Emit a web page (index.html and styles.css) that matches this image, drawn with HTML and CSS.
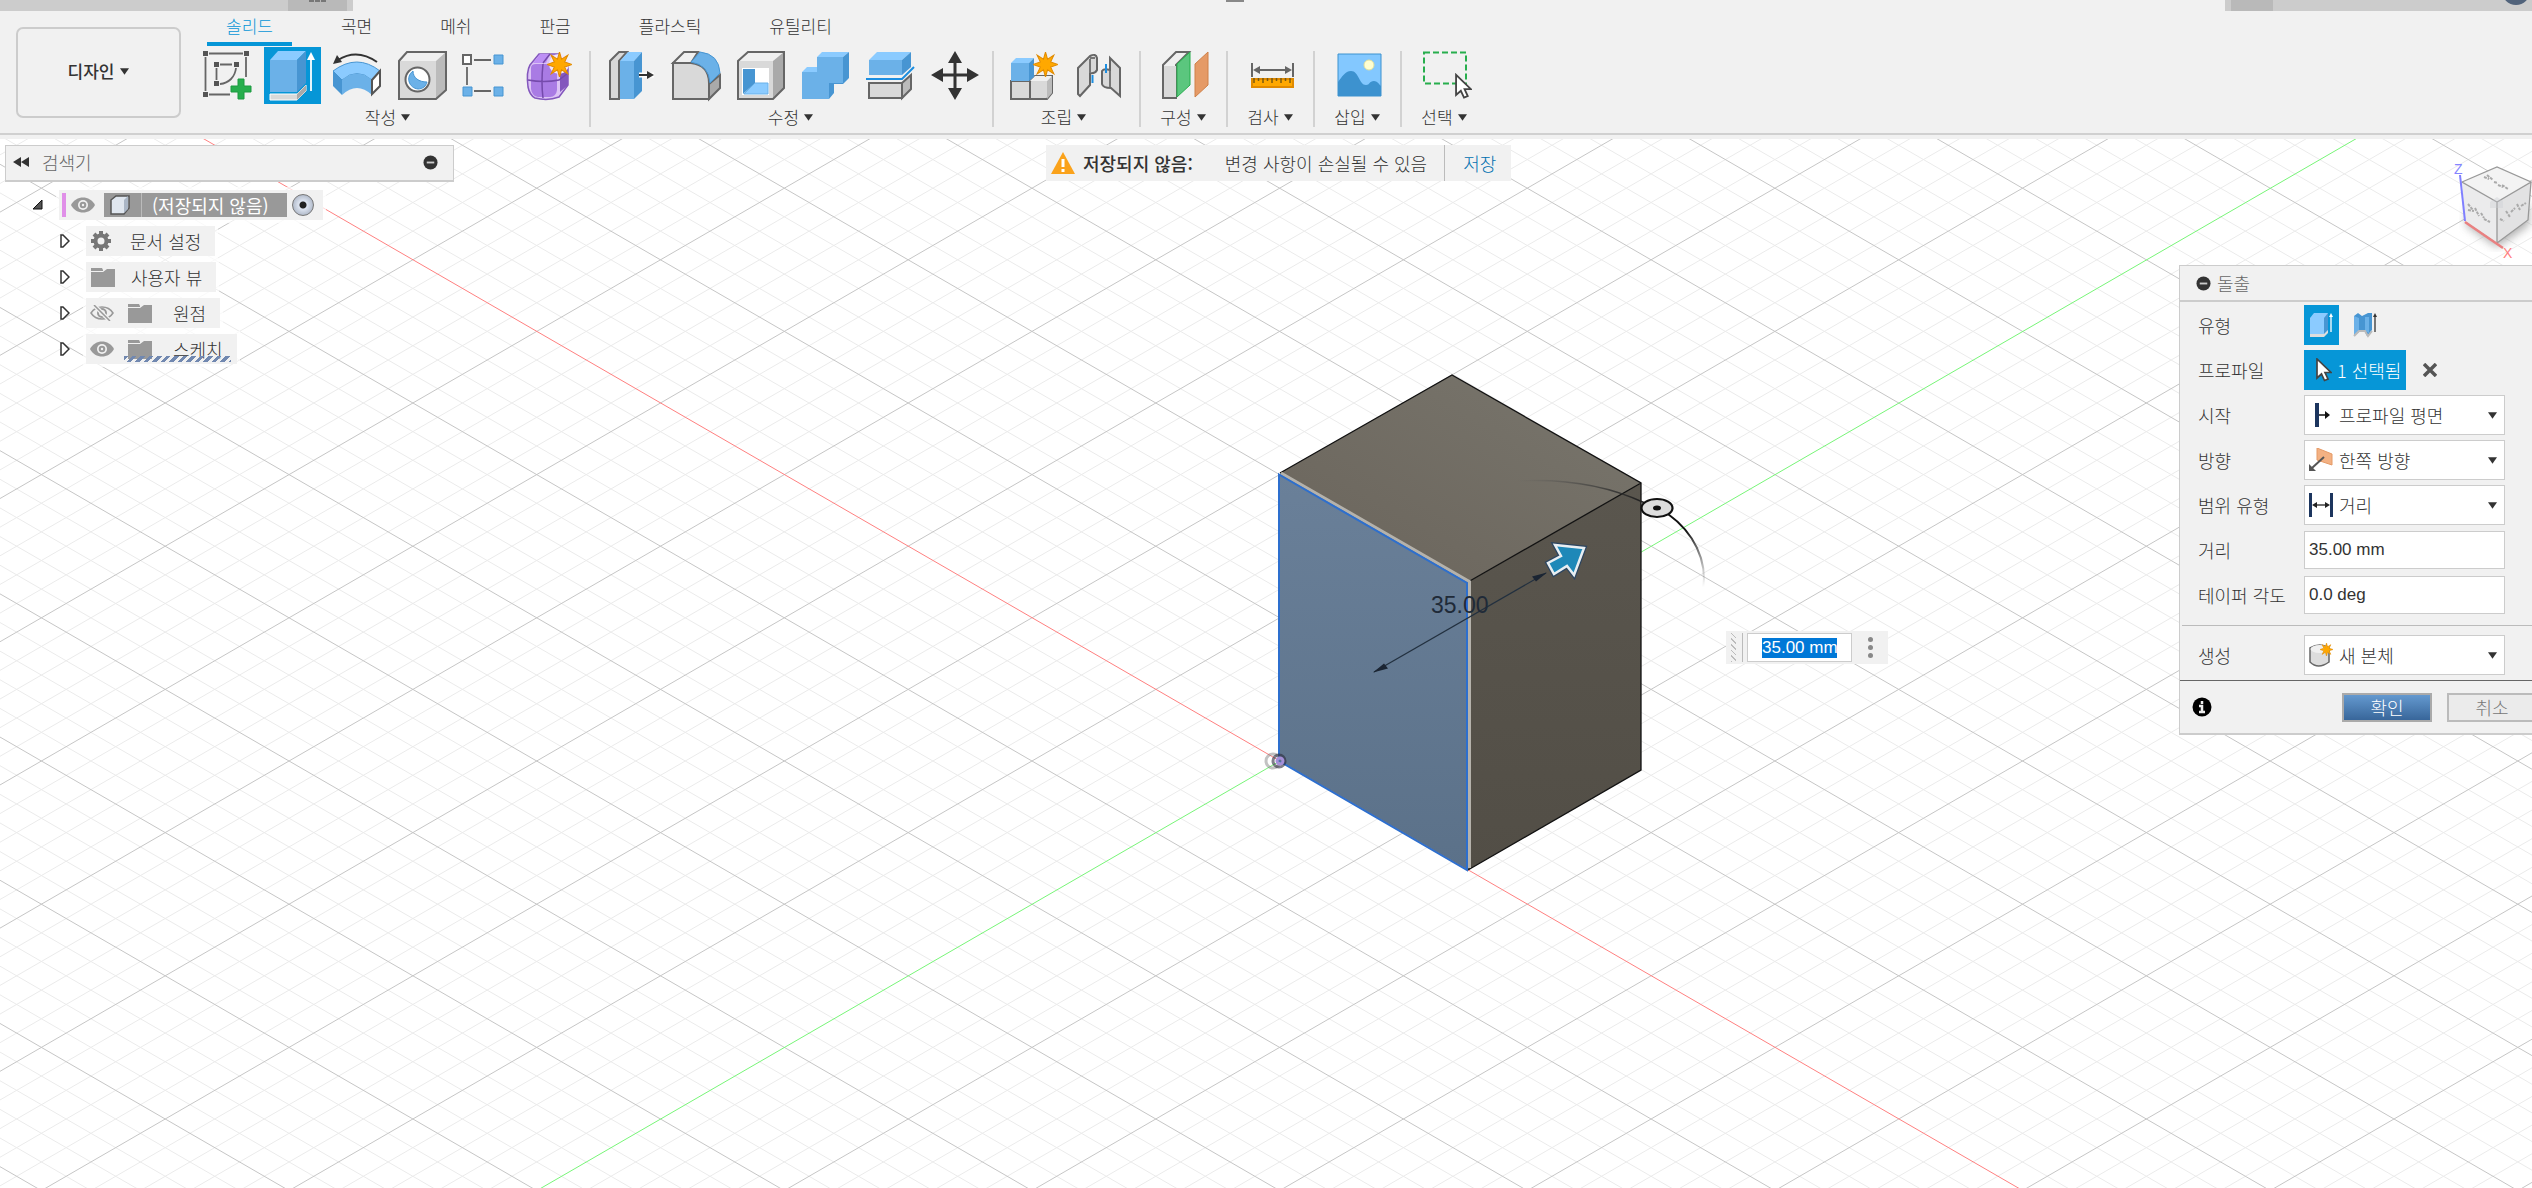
FILE: index.html
```html
<!DOCTYPE html>
<html lang="ko">
<head>
<meta charset="utf-8">
<title>디자인</title>
<link rel="stylesheet" href="styles.css">
</head>
<body>
<svg class="defs" aria-hidden="true">
  <defs>
    <symbol id="i-star" viewBox="0 0 24 24"><path d="M12 0l2 7 6-4-3 6.500 7 2.500-7 2.500 3 6.500-6-4-2 7-2-7-6 4 3-6.500-7-2.500 7-2.500-3-6.500 6 4z" fill="#ffa800" stroke="#e08a00"/></symbol>
    <symbol id="i-down" viewBox="0 0 10 7"><path d="M0 0h10L5 7z" fill="#333"/></symbol>
    <symbol id="i-minus" viewBox="0 0 16 16"><circle cx="8" cy="8" r="7.500" fill="#333"/><path d="M4 8h8" stroke="#ccc" stroke-width="2"/></symbol>
    <symbol id="i-eye" viewBox="0 0 24 16"><path d="M0 8C5-2 19-2 24 8 19 18 5 18 0 8z" fill="#999"/><circle cx="12" cy="8" r="5" fill="#f1f1f1"/><circle cx="12" cy="8" r="3.300" fill="#999"/><circle cx="12" cy="8" r="1.200" fill="#f1f1f1"/></symbol>
    <symbol id="i-folder" viewBox="0 0 26 20"><path d="M1 1h11l1 2v1H1zM1 5h12l4-3h8v18H1z" fill="#999"/></symbol>
    <symbol id="i-expand" viewBox="0 0 10 14"><path d="M1 1v12h2l6-6-6-6z" fill="#fff" stroke="#333" stroke-width="1.500"/></symbol>
    <symbol id="i-cursor" viewBox="0 0 16 24"><path d="M1 1v19l4.500-4 3 6.500 3.500-1.500-3-6.500h6z" fill="#fff" stroke="#444" stroke-width="1.700"/></symbol>
  </defs>
</svg>

<header class="toolbar">
  <div class="strip">
    <div class="strip-left"><span class="strip-tab"><i></i><i></i><i></i></span></div>
    <div class="strip-handle"></div>
    <div class="strip-right"><span class="strip-tab"></span><span class="avatar"></span></div>
  </div>
  <div class="toolbar-body">
    <button class="workspace" type="button">디자인 <svg class="down"><use href="#i-down"/></svg></button>
    <div class="ribbon">
      <nav class="tabs">
        <a href="#solid" class="tab active">솔리드</a>
        <a href="#surface" class="tab">곡면</a>
        <a href="#mesh" class="tab">메쉬</a>
        <a href="#sheet" class="tab">판금</a>
        <a href="#plastic" class="tab">플라스틱</a>
        <a href="#utility" class="tab">유틸리티</a>
      </nav>
      <div class="groups">
        <section class="group">
          <div class="tools">
            <button class="tool" type="button" aria-label="스케치 작성"><svg viewBox="0 0 49 49"><path d="M6 2.500h34M2.500 6v34M6 43.500h21M43 6v20M17 13.500h12M13.500 17v12M33 17c-1 9-7 15-16 16" fill="none" stroke="#666" stroke-width="1.800"/><path d="M0 0h5v5H0zM41 0h5v5h-5zM0 41h5v5H0zM11 11h5v5h-5zM31 11h5v5h-5zM11 30h5v5h-5z" fill="#555"/><path d="M35 28h6v7h7v6h-7v7h-6v-7h-7v-6h7z" fill="#27ae4d" stroke="#1d9a40"/></svg></button>
            <button class="tool selected" type="button" aria-label="돌출"><svg viewBox="0 0 49 49"><path d="M2 9h27v32H2z" fill="#6bb1e8"/><path d="M2 9l8-9h28l-9 9z" fill="#8bcbff"/><path d="M29 9l9-9v32l-9 9z" fill="#4795d2"/><path d="M2 43h27l9-9v6l-9 9H2z" fill="#d9d9d9" stroke="#fff"/><path d="M29 43l9-9v6l-9 9z" fill="#aaa"/><path d="M43 40V7" stroke="#fff" stroke-width="1.800"/><path d="M43 1l4 8h-8z" fill="#fff"/></svg></button>
            <button class="tool" type="button" aria-label="회전"><svg viewBox="0 0 49 49"><path d="M0 20q24-18 47 0l-8 9q-15-13-30 0z" fill="#8bcbff" stroke="#4795d2"/><path d="M9 29q15-13 30 0v15q-15-14-30 0z" fill="#6bb1e8"/><path d="M0 20l9 9v15l-9-9z" fill="#4795d2"/><path d="M39 29l8-9v15l-8 8z" fill="#fff" stroke="#555" stroke-width="2"/><path d="M44 11Q24-3 5 9" fill="none" stroke="#333" stroke-width="2"/><path d="M0 13l4-9 5 7z" fill="#333"/></svg></button>
            <button class="tool" type="button" aria-label="구멍"><svg viewBox="0 0 49 49"><path d="M1 10h37v38H1z" fill="#d9d9d9"/><path d="M1 10l8-9h39L38 10z" fill="#f0f0f0"/><path d="M38 10l10-9v38l-10 9z" fill="#bbb"/><path d="M1 48V10l8-9h39v38l-10 9z" fill="none" stroke="#666" stroke-width="2"/><circle cx="19.500" cy="28.500" r="12" fill="#fff" stroke="#666" stroke-width="2"/><path d="M15 20c-8 6-4 17 5 18 5 0 8-3 9-7-8 0-14-4-14-11z" fill="#6bb1e8" stroke="#4795d2"/></svg></button>
            <button class="tool" type="button" aria-label="직사각형 패턴"><svg viewBox="0 0 49 49"><path d="M11 9h17M4 16v18M11 40h17" stroke="#666" stroke-width="1.800"/><path d="M0 4h8v9H0z" fill="#fff" stroke="#666" stroke-width="2"/><path d="M31 4h9v9h-9zM0 36h9v9H0zM31 36h9v9h-9z" fill="#6bb1e8" stroke="#4795d2"/></svg></button>
            <button class="tool" type="button" aria-label="양식 작성"><svg viewBox="0 0 49 49"><path d="M0 36c-1-8-1-17 2-22L11 3h20l9 12v19l-9 12c-8 3-16 3-24 1-4-2-6-6-7-11z" fill="#dcc3f5" stroke="#8357bd" stroke-width="1.500"/><path d="M12 3h10l-4 9H5z" fill="#bd8ff5"/><path d="M3 17q0-4 5-4h16q5 0 5 6v20q-1 7-7 7H10q-6-1-7-8z" fill="#a97be4"/><path d="M32 14l8-2v22l-8 7z" fill="#8357bd"/><path d="M0 29q16 3 31 0l9-7M15 13q-2 18 0 34M15 12l7-9" fill="none" stroke="#754aac" stroke-width="1.500"/><circle cx="31" cy="13" r="10" fill="#f1e6fb"/><use href="#i-star" x="19" y="1" width="25" height="25"/></svg></button>
          </div>
          <button class="menu" type="button">작성<svg class="down"><use href="#i-down"/></svg></button>
        </section>
        <section class="group">
          <div class="tools">
            <button class="tool" type="button" aria-label="밀고 당기기"><svg viewBox="0 0 49 49"><path d="M13 48H4V10l9-9h8l-8 9z" fill="#d9d9d9" stroke="#666" stroke-width="2"/><path d="M14 10h14v38H14z" fill="#6bb1e8"/><path d="M14 10l8-9h14l-8 9z" fill="#8bcbff"/><path d="M28 10l8-9v39l-8 8z" fill="#4795d2"/><path d="M33 24h15" stroke="#fff" stroke-width="5"/><path d="M33 24h9" stroke="#333" stroke-width="2"/><path d="M41 20l7 4-7 4z" fill="#333"/></svg></button>
            <button class="tool" type="button" aria-label="모깎기"><svg viewBox="0 0 49 49"><path d="M2 12L13 1h14l-7 11z" fill="#f0f0f0" stroke="#666" stroke-width="2"/><path d="M2 12h18q18 2 18 20v16H2z" fill="#d9d9d9" stroke="#666" stroke-width="2"/><path d="M38 33l11-9v13L38 48z" fill="#aaa" stroke="#666" stroke-width="2"/><path d="M20 11l9-10q19 2 20 21L39 32Q38 14 20 11z" fill="#6bb1e8" stroke="#4795d2"/></svg></button>
            <button class="tool" type="button" aria-label="쉘"><svg viewBox="0 0 49 49"><path d="M2 10h35v38H2z" fill="#d9d9d9"/><path d="M2 10l10-9h36L37 10z" fill="#f0f0f0"/><path d="M37 10l11-9v36L37 48z" fill="#aaa"/><path d="M2 48V10l10-9h36v36L37 48z" fill="none" stroke="#666" stroke-width="2"/><path d="M6 17h27v27H6z" fill="#fff"/><path d="M7 18h12v14L7 43z" fill="#4795d2"/><path d="M19 32h13v11H8z" fill="#8bcbff" stroke="#6bb1e8"/></svg></button>
            <button class="tool" type="button" aria-label="결합"><svg viewBox="0 0 49 49"><path d="M1 21h15V6h26v26H28v16H1z" fill="#6bb1e8"/><path d="M1 21l5-5h10v5zM16 6l5-5h27l-6 5z" fill="#8bcbff"/><path d="M42 6l6-5v26l-6 6h-9v9l-5 6V32h14z" fill="#4795d2"/></svg></button>
            <button class="tool" type="button" aria-label="본체 분할"><svg viewBox="0 0 49 49"><path d="M3 9h33v15H3z" fill="#6bb1e8"/><path d="M3 9l8-8h34l-9 8z" fill="#8bcbff"/><path d="M36 9l9-8v15l-9 8z" fill="#4795d2"/><path d="M0 28h36l12-12" fill="none" stroke="#1c8ee0" stroke-width="2"/><path d="M3 32h33v15H3z" fill="#d9d9d9" stroke="#666" stroke-width="2"/><path d="M36 32l9-8v14l-9 9z" fill="#bbb" stroke="#666" stroke-width="2"/></svg></button>
            <button class="tool" type="button" aria-label="이동"><svg viewBox="0 0 49 49"><path d="M24 8v33M8 24h33" stroke="#333" stroke-width="3"/><path d="M24 0l7 12H17zM24 49l7-12H17zM0 24l12-7v14zM48 24l-12-7v14z" fill="#333"/></svg></button>
          </div>
          <button class="menu" type="button">수정<svg class="down"><use href="#i-down"/></svg></button>
        </section>
        <section class="group wide">
          <div class="tools">
            <button class="tool" type="button" aria-label="새 구성요소"><svg viewBox="0 0 49 49"><path d="M2 30h19v18H2z" fill="#d9d9d9" stroke="#666" stroke-width="2"/><path d="M21 30l5-5h17v17l-5 6H21z" fill="#d9d9d9" stroke="#666" stroke-width="2"/><path d="M38 30l5-5v17l-5 6z" fill="#bbb"/><path d="M21 30l5-5h17l-5 5z" fill="#f0f0f0"/><path d="M2 12h18v18H2z" fill="#6bb1e8"/><path d="M2 12l5-5h18l-5 5z" fill="#8bcbff"/><path d="M20 12l5-5v19l-5 4z" fill="#4795d2"/><circle cx="37" cy="13" r="11" fill="#f1f1f1"/><use href="#i-star" x="24" y="1" width="25" height="25"/></svg></button>
            <button class="tool" type="button" aria-label="조인트"><svg viewBox="0 0 49 49"><path d="M5 16L16 5q6-3 7 2v12q-2 4-7 3v12L6 45l-2-2V17z" fill="#d9d9d9" stroke="#666" stroke-width="2"/><path d="M16 8v14M16 7h5" stroke="#777" stroke-width="2"/><path d="M36 7l10 10v28l-9-8q-8 0-9-4V20q2-3 8-1z" fill="#d9d9d9" stroke="#666" stroke-width="2"/><path d="M36 20v16" stroke="#777" stroke-width="2"/><path d="M18.500 24v8M32 13v9" stroke="#1c8ee0" stroke-width="2"/></svg></button>
          </div>
          <button class="menu" type="button">조립<svg class="down"><use href="#i-down"/></svg></button>
        </section>
        <section class="group wide">
          <div class="tools">
            <button class="tool" type="button" aria-label="평면 간격띄우기"><svg viewBox="0 0 49 49"><path d="M2 14L15 1h13L15 14v33H2z" fill="#f0f0f0" stroke="#666" stroke-width="2"/><path d="M3 15h12v31H3z" fill="#d9d9d9"/><path d="M16 13L29 1v33L16 46z" fill="#5bc67e" stroke="#27ae4d"/><path d="M34 13L47 1v33L34 46z" fill="#e59a66" stroke="#cf8048"/></svg></button>
          </div>
          <button class="menu" type="button">구성<svg class="down"><use href="#i-down"/></svg></button>
        </section>
        <section class="group wide">
          <div class="tools">
            <button class="tool" type="button" aria-label="측정"><svg viewBox="0 0 49 49"><path d="M4 12v14M45 12v14M8 19h33" stroke="#666" stroke-width="2"/><path d="M5 19l7-4v8zM44 19l-7-4v8z" fill="#666"/><path d="M4 28h41v8H4z" fill="#ffa800" stroke="#e08a00" stroke-width="2"/><path d="M6 27v5M10.500 27v3M15 27v5M19.500 27v3M24 27v5M28.500 27v3M33 27v5M37.500 27v3M42 27v5" stroke="#7a5a10" stroke-width="1.500"/></svg></button>
          </div>
          <button class="menu" type="button">검사<svg class="down"><use href="#i-down"/></svg></button>
        </section>
        <section class="group wide">
          <div class="tools">
            <button class="tool" type="button" aria-label="이미지 삽입"><svg viewBox="0 0 49 49"><path d="M3 3h43v42H3z" fill="#83c8ff"/><path d="M3 31c4-5 7-11 13-11 8 0 8 14 15 14 4 0 3-4 8-4 3 0 5 3 7 5v10H3z" fill="#3d92cf"/><circle cx="34" cy="14" r="5" fill="#ffffd0" stroke="#e0e0a0"/><path d="M3 3h43v42H3z" fill="none" stroke="#3d92cf"/></svg></button>
          </div>
          <button class="menu" type="button">삽입<svg class="down"><use href="#i-down"/></svg></button>
        </section>
        <section class="group wide">
          <div class="tools">
            <button class="tool" type="button" aria-label="선택"><svg viewBox="0 0 49 49"><path d="M2 1.500h42V32.500H2z" fill="none" stroke="#27ae4d" stroke-width="2" stroke-dasharray="6 3"/><use href="#i-cursor" x="33" y="22" width="17" height="27"/></svg></button>
          </div>
          <button class="menu" type="button">선택<svg class="down"><use href="#i-down"/></svg></button>
        </section>
      </div>
    </div>
  </div>
</header>

<main class="canvas">
  <svg class="scene" viewBox="0 139 2532 1049" preserveAspectRatio="xMidYMid slice">
    <defs>
      <linearGradient id="top" x1="0" y1="1" x2="1" y2="0"><stop offset="0" stop-color="#6a645b"/><stop offset="1" stop-color="#79766d"/></linearGradient>
      <linearGradient id="right" x1="0" y1="0" x2="0" y2="1"><stop offset="0" stop-color="#5a564e"/><stop offset="1" stop-color="#524e46"/></linearGradient>
      <linearGradient id="left" x1="0" y1="0" x2="0" y2="1"><stop offset="0" stop-color="#6a8099"/><stop offset="1" stop-color="#5b7189"/></linearGradient>
      <linearGradient id="arc" gradientUnits="userSpaceOnUse" x1="1517" y1="481" x2="1640" y2="500"><stop offset="0" stop-color="#555" stop-opacity="0"/><stop offset="1" stop-color="#222"/></linearGradient>
      <linearGradient id="arc2" gradientUnits="userSpaceOnUse" x1="1690" y1="530" x2="1700" y2="588"><stop offset="0" stop-color="#111"/><stop offset="1" stop-color="#555" stop-opacity="0"/></linearGradient>
      <filter id="soft"><feGaussianBlur stdDeviation="5"/></filter>
    </defs>
    <path class="grid-minor" id="minor"/>
    <path class="grid-major" id="major"/>
    <path class="axis-x" d="M0 21L2532 1485"/>
    <path class="axis-y" d="M0 1501L2532 37"/>

    <path d="M1280 473L1452 375 1641 483 1468 582z" fill="url(#top)"/>
    <path d="M1468 582L1641 483V770L1468 870z" fill="url(#right)"/>
    <path d="M1280 473L1468 582V870L1280 761z" fill="url(#left)"/>
    <path d="M1280 473L1452 375 1641 483V770L1468 870M1641 483L1468 582" fill="none" stroke="#111" stroke-width="1.300"/>
    <path d="M1281 473L1469.500 581.500V868" fill="none" stroke="#b5b2ab" stroke-width="3"/>
    <path d="M1279 474.500L1467 583V870L1279 761z" fill="none" stroke="#2d6fce" stroke-width="2"/>
    <g fill="none" stroke-width="3"><circle cx="1273" cy="761" r="7" stroke="#777" opacity=".45"/><circle cx="1279" cy="761" r="6" stroke="#2b2b3c" opacity=".6"/><circle cx="1280" cy="761" r="3" stroke="#a58fd8"/></g>

    <path d="M1374 672L1546 573" stroke="#22303f" stroke-width="1.200"/>
    <path d="M1373 672.500l11-9 4 5zM1547 572.500l-15 4 4 5z" fill="#1b2533"/>
    <text x="1431" y="613" class="dimension">35.00</text>
    <path d="M1517 481C1570 478 1613 488 1645 503" fill="none" stroke="url(#arc)" stroke-width="1.500"/>
    <path d="M1668 514C1693 532 1708 560 1703 590" fill="none" stroke="url(#arc2)" stroke-width="2"/>
    <ellipse cx="1657" cy="508" rx="15.500" ry="9" fill="#ddd" stroke="#111" stroke-width="2.200"/>
    <ellipse cx="1657" cy="508" rx="4" ry="2.500" fill="#111"/>
    <path d="M1584 548L1555 545l6 11-13 7 6 11 13-8 7 9z" fill="#1e88b8" stroke="#2c4560" stroke-width="5"/>
    <path d="M1584 548L1555 545l6 11-13 7 6 11 13-8 7 9z" fill="#1e88b8" stroke="#e8eef2" stroke-width="2.500"/>
  </svg>

  <section class="browser">
    <div class="browser-head">
      <svg class="collapse" viewBox="0 0 16 10"><path d="M8 0v10L0 5zM16 0v10L8 5z" fill="#333"/></svg>
      <span>검색기</span>
      <svg class="minus"><use href="#i-minus"/></svg>
    </div>
    <ul class="tree">
      <li class="root">
        <svg class="twist" viewBox="0 0 10 14"><path d="M9 2v9H0z" fill="#555" stroke="#111"/></svg>
        <span class="node">
          <i class="mark"></i>
          <svg class="eye"><use href="#i-eye"/></svg>
          <span class="doc">
            <svg class="doc-icon" viewBox="0 0 20 20"><path d="M1 5l5-4h13v12l-5 6H1z" fill="#dfe6ef" stroke="#555" stroke-width="1.500"/><path d="M14 5l4-4v13l-4 4z" fill="#aab6c6"/></svg>
            <b>(저장되지 않음)</b>
          </span>
          <input class="activate" type="radio" aria-label="구성요소 활성화" checked>
        </span>
      </li>
      <li><svg class="twist"><use href="#i-expand"/></svg><span class="node"><svg class="gear" viewBox="0 0 20 20"><circle cx="10" cy="10" r="5.500" fill="none" stroke="#777" stroke-width="4"/><path d="M10 0v4M10 16v4M0 10h4M16 10h4M3 3l3 3M14 14l3 3M17 3l-3 3M6 14l-3 3" stroke="#777" stroke-width="4"/></svg><span class="name">문서 설정</span></span></li>
      <li><svg class="twist"><use href="#i-expand"/></svg><span class="node"><svg class="folder"><use href="#i-folder"/></svg><span class="name">사용자 뷰</span></span></li>
      <li><svg class="twist"><use href="#i-expand"/></svg><span class="node"><svg class="eye" viewBox="0 0 24 16"><path d="M1 8C6 0 18 0 23 8 18 16 6 16 1 8z" fill="none" stroke="#999" stroke-width="1.500"/><circle cx="12" cy="8" r="4" fill="none" stroke="#999" stroke-width="2"/><path d="M4 0l16 16" stroke="#f1f1f1" stroke-width="4"/><path d="M4 0l16 16" stroke="#999" stroke-width="1.500"/></svg><svg class="folder second"><use href="#i-folder"/></svg><span class="name">원점</span></span></li>
      <li><svg class="twist"><use href="#i-expand"/></svg><span class="node hatched"><svg class="eye"><use href="#i-eye"/></svg><svg class="folder second"><use href="#i-folder"/></svg><span class="name">스케치</span></span></li>
    </ul>
  </section>

  <div class="notice" role="status">
    <svg class="warn" viewBox="0 0 24 22"><path d="M12 0l12 22H0z" fill="#faa21b"/><path d="M12 7v8M12 17v3" stroke="#fff" stroke-width="3"/></svg>
    <b>저장되지 않음:</b>
    <span class="detail">변경 사항이 손실될 수 있음</span>
    <a href="#save">저장</a>
  </div>

  <svg class="viewcube" viewBox="2450 155 82 110">
    <path d="M2466 225l31 22 32-22v-20h-60z" fill="#777" opacity=".6" filter="url(#soft)"/>
    <path d="M2462 182l35-15 34 15-34 20z" fill="#f3f3f3"/>
    <path d="M2462 182l35 20v41l-32-22z" fill="#ebebec"/>
    <path d="M2531 182l-34 20v41l31-23z" fill="#e2e2e3"/>
    <path d="M2462 182l35-15 34 15-34 20zM2497 202v41M2531 182l-3 38-31 23" fill="none" stroke="#999" stroke-width="1.300"/>
    <path d="M2484 177l5 2M2487 175l6 5M2494 182l4 1M2498 185l5 2M2502 185l6 4M2468 204l5 6M2468 210l6 1M2475 208l4 8M2481 213l3 5M2484 219l6 3M2500 219l4 2M2506 211l4 6M2511 212l4-4M2517 204l3 6M2521 206l5-3" fill="none" stroke="#aaa" stroke-width="2" stroke-dasharray="3 1"/>
    <path d="M2490 202l7-5 6 4v7h-13z" fill="#c9ccd2" opacity=".35"/>
    <path d="M2460 175l5 46" stroke="#7f7fff" stroke-width="2"/>
    <path d="M2465 222l38 26" stroke="#e98080" stroke-width="2.500"/>
    <text x="2454" y="174" fill="#8585ff">Z</text>
    <text x="2503" y="258" fill="#ff8080">X</text>
  </svg>

  <form class="value-box">
    <span class="grip"></span>
    <input id="distance-inline" type="text" value="35.00 mm" aria-label="거리">
    <button type="button" aria-label="추가 옵션"><i></i><i></i><i></i></button>
  </form>

  <form class="dialog">
    <div class="dialog-head"><svg class="minus"><use href="#i-minus"/></svg><h2>돌출</h2></div>
    <div class="fields">
      <span>유형</span>
      <div class="types">
        <button class="type selected" type="button" aria-label="돌출"><svg viewBox="0 0 24 26"><path d="M1 6l4-5h14v17l-4 6H1z" fill="#8bcbff"/><path d="M15 6l4-5v17l-4 5z" fill="#4795d2"/><path d="M1 22h14l4-4v3l-4 4H1z" fill="#ddd"/><path d="M22 20V3" stroke="#fff" stroke-width="1.300"/><path d="M20 5h4l-2-4z" fill="#fff"/></svg></button>
        <button class="type" type="button" aria-label="얇은 돌출"><svg viewBox="0 0 24 26"><path d="M1 4l4-3 4 3 6-3h4v17l-5 6-2-4H6l-5 4z" fill="#4795d2"/><path d="M1 4l5 2v14l-5 3zM12 5h4v16l-4-2z" fill="#6bb1e8"/><path d="M1 24l5-5h6l3 5 4-5" fill="none" stroke="#bbb" stroke-width="2"/><path d="M22 20V3" stroke="#333" stroke-width="1.300"/><path d="M20 5h4l-2-4z" fill="#333"/></svg></button>
      </div>
      <span>프로파일</span>
      <div class="types">
        <button class="pick" type="button"><svg class="pick-icon"><use href="#i-cursor"/></svg>1 선택됨</button>
        <button class="clear" type="button" aria-label="선택 지우기"><svg viewBox="0 0 14 14"><path d="M1 1l12 12M13 1L1 13" stroke="#555" stroke-width="3.500"/></svg></button>
      </div>
      <label for="start">시작</label>
      <div class="select"><svg class="opt" viewBox="0 0 24 24"><path d="M8 0v24" stroke="#1c355e" stroke-width="4"/><path d="M10 12h8" stroke="#111" stroke-width="1.500"/><path d="M16 8l5 4-5 4z" fill="#111"/></svg><select id="start"><option>프로파일 평면</option></select><svg class="down"><use href="#i-down"/></svg></div>
      <label for="direction">방향</label>
      <div class="select"><svg class="opt" viewBox="0 0 24 24"><path d="M8 0l15 6v11L8 12z" fill="#f3b183" stroke="#e59a66"/><path d="M15 9L3 20" stroke="#555" stroke-width="2"/><path d="M0 23v-7l7 7z" fill="#555"/></svg><select id="direction"><option>한쪽 방향</option></select><svg class="down"><use href="#i-down"/></svg></div>
      <label for="extent">범위 유형</label>
      <div class="select"><svg class="opt" viewBox="0 0 24 24"><path d="M1.500 0v24M22.500 0v24" stroke="#1c355e" stroke-width="3"/><path d="M5 12h14" stroke="#222" stroke-width="1.300"/><path d="M3 12l5-3v6zM21 12l-5-3v6z" fill="#222"/></svg><select id="extent"><option>거리</option></select><svg class="down"><use href="#i-down"/></svg></div>
      <label for="distance">거리</label>
      <input id="distance" type="text" value="35.00 mm">
      <label for="taper">테이퍼 각도</label>
      <input id="taper" type="text" value="0.0 deg">
      <hr>
      <label for="operation">생성</label>
      <div class="select"><svg class="opt" viewBox="0 0 24 24"><path d="M1 5v14q8 8 19 0V5q-9-6-19 0z" fill="#ddd" stroke="#666" stroke-width="1.500"/><ellipse cx="10.500" cy="6" rx="9" ry="4" fill="#f0f0f0"/><use href="#i-star" x="11" y="0" width="13" height="13"/></svg><select id="operation"><option>새 본체</option></select><svg class="down"><use href="#i-down"/></svg></div>
    </div>
    <footer class="dialog-foot">
      <svg class="info" viewBox="0 0 20 20"><circle cx="10" cy="10" r="9.500" fill="#000"/><path d="M10 4v3M7 9h3v6M7 15h6" stroke="#eee" stroke-width="2.500" fill="none"/></svg>
      <button class="ok" type="button">확인</button>
      <button class="cancel" type="button">취소</button>
    </footer>
  </form>
</main>
<script src="script.js"></script>
</body>
</html>
```
FILE: styles.css
```css
* { box-sizing: border-box; }

body {
  margin: 0;
  min-height: 100vh;
  display: flex;
  flex-direction: column;
  overflow: hidden;
  background: #fff;
  color: #333;
  font: 300 17px/24px "Noto Sans CJK KR", "Liberation Sans", sans-serif;
}

button, input, select { font: inherit; color: inherit; }
button { border: 0; padding: 0; background: none; }
a { color: inherit; text-decoration: none; }
svg { display: block; flex: none; }
.defs { position: absolute; width: 0; height: 0; }
.down { width: 9px; height: 7px; }
.minus { width: 15px; height: 15px; }

/* toolbar */
.toolbar {
  background: #f1f1f1;
  padding-bottom: 4px;
}
.strip {
  display: flex;
  justify-content: space-between;
  height: 11px;
  overflow: hidden;
}
.strip-left, .strip-right { display: flex; background: #ccc; }
.strip-left { width: 353px; padding-right: 6px; justify-content: flex-end; }
.strip-right { width: 307px; padding: 0 2px 0 6px; justify-content: space-between; }
.strip-tab {
  display: flex;
  justify-content: center;
  gap: 1px;
  width: 59px;
  background: #b9b9b9;
}
.strip-right .strip-tab { width: 42px; }
.strip-tab i { width: 5px; height: 2px; background: #777; }
.strip-handle { width: 18px; height: 2px; margin-left: -108px; background: #888; }
.avatar { width: 28px; height: 28px; margin-top: -23px; border-radius: 50%; background: #51637b; }

.toolbar-body {
  display: flex;
  gap: 18px;
  padding: 0 16px;
  height: 124px;
  border-bottom: 2px solid #d0d0d0;
}
.workspace {
  display: flex;
  align-items: center;
  justify-content: center;
  gap: 6px;
  width: 165px;
  height: 91px;
  margin-top: 16px;
  padding-bottom: 3px;
  border: 2px solid #ccc;
  border-radius: 7px;
  font-weight: 500;
}
.tabs { display: flex; gap: 30px; padding-left: 8px; height: 36px; }
.tab { padding: 3px 19px 0; height: 35px; }
.tab.active { color: #0696d7; border-bottom: 4px solid #0696d7; }

.groups { display: flex; }
.group {
  display: flex;
  flex-direction: column;
  align-items: center;
  margin-right: 11px;
  padding-right: 8px;
}
.group.wide { margin-right: 16px; padding-right: 12px; }
.group:not(:last-child) {
  border-right: 2px solid #d2d2d2;
  height: 76px;
  margin-top: 4px;
}
.group:not(:last-child) .tools { margin-top: -4px; }
.tools { display: flex; gap: 8px; }
.tool { width: 57px; height: 57px; padding: 4px; }
.tool svg { width: 49px; height: 49px; overflow: visible; }
.tool.selected { background: #0696d7; }
.menu { display: flex; align-items: center; gap: 5px; padding: 1px 5px 0 0; white-space: nowrap; }

/* canvas */
.canvas { position: relative; flex: 1; overflow: hidden; min-height: 640px; }
.scene { position: absolute; inset: 0; width: 100%; height: 100%; }
.grid-minor { stroke: #ebebeb; fill: none; }
.grid-major { stroke: #c6c6c6; fill: none; }
.axis-x { stroke: #ff8080; }
.axis-y { stroke: #78f578; }
.dimension { font: 23px "Liberation Sans", sans-serif; fill: #1f2a38; }

/* browser */
.browser { position: absolute; left: 5px; top: 6px; width: 449px; font-size: 18px; }
.browser-head {
  display: flex;
  align-items: center;
  height: 37px;
  padding: 0 15px 2px 7px;
  background: #f1f1f1;
  border: 1px solid #ccc;
  border-bottom-width: 2px;
  color: #666;
}
.browser-head span { flex: 1; margin-left: 13px; }
.collapse { width: 16px; height: 10px; }
.tree {
  display: flex;
  flex-direction: column;
  gap: 6px;
  margin: 8px 0 0;
  padding: 0 0 0 55px;
  list-style: none;
}
.tree li { display: flex; align-items: center; gap: 16px; height: 30px; }
.tree .root { margin-left: -27px; }
.twist { width: 10px; height: 14px; }
.node {
  display: flex;
  align-items: center;
  height: 30px;
  padding: 0 14px 0 4px;
  background: #f1f1f1;
  box-shadow: 0 0 0 3px rgba(255, 255, 255, .7);
}
.root .node { padding: 0 9px 0 3px; }
.mark { width: 4px; height: 24px; margin-right: 5px; background: #e08fe8; }
.eye { width: 24px; height: 16px; }
.doc {
  display: flex;
  align-items: center;
  height: 24px;
  width: 183px;
  margin: 0 5px 0 9px;
  padding-left: 6px;
  background: #999;
  color: #fff;
}
.doc-icon { width: 20px; height: 20px; margin-right: 11px; }
.doc b { flex: 1; padding-left: 10px; border-left: 1px solid #bbb; white-space: nowrap; }
.activate {
  appearance: none;
  width: 22px;
  height: 22px;
  margin: 0;
  border: 1px solid #777;
  border-radius: 50%;
  background: radial-gradient(circle, #222 0 3px, #dfe6f2 4px, #b4bdcc 10px);
}
.gear { width: 20px; height: 20px; margin: 0 4px 0 1px; }
.folder { width: 26px; height: 20px; }
.folder.second { margin: 0 5px 0 13px; }
.name { margin-left: 15px; }
.hatched { position: relative; }
.hatched::after {
  content: "";
  position: absolute;
  left: 38px;
  right: 6px;
  bottom: 2px;
  height: 6px;
  background: repeating-linear-gradient(135deg, #7188b0 0 3px, transparent 3px 6px);
}

/* unsaved notice */
.notice {
  position: absolute;
  left: calc(50% - 220px);
  top: 6px;
  display: flex;
  align-items: center;
  height: 36px;
  padding: 0 15px 0 5px;
  background: #f1f1f1;
  font-size: 18px;
  white-space: nowrap;
}
.warn { width: 24px; height: 22px; margin-right: 8px; }
.notice b { font-weight: 500; }
.detail { margin: 0 17px 0 32px; }
.notice a {
  padding: 6px 0 6px 18px;
  border-left: 1px solid #bbb;
  color: #0070b0;
}

.viewcube { position: absolute; right: 0; top: 16px; width: 82px; height: 110px; }
.viewcube text { font: 14px "Liberation Sans", sans-serif; }

/* inline distance input */
.value-box {
  position: absolute;
  left: 1726px;
  top: 492px;
  display: flex;
  align-items: center;
  height: 33px;
  padding-left: 5px;
  background: #f1f1f1;
}
.grip {
  width: 12px;
  height: 29px;
  margin-right: 4px;
  border-right: 1px solid #bbb;
  background: repeating-linear-gradient(45deg, #bbb 0 1px, transparent 1px 4px) left / 5px 100% no-repeat;
}
.value-box input {
  width: 105px;
  height: 29px;
  padding: 0 14px;
  border: 1px solid #ccc;
  outline: 0;
  background: #fff;
  font: 17px "Liberation Sans", sans-serif;
}
.value-box input::selection { background: #0078d7; color: #fff; }
.value-box button {
  display: flex;
  flex-direction: column;
  align-items: center;
  gap: 3px;
  width: 36px;
}
.value-box i { width: 5px; height: 5px; border-radius: 50%; background: #888; }

/* dialog */
.dialog {
  position: absolute;
  right: -20px;
  top: 126px;
  width: 373px;
  background: #f1f1f1;
  border: 1px solid #ccc;
  border-bottom-width: 2px;
  font-size: 18px;
}
.dialog-head {
  display: flex;
  align-items: center;
  gap: 6px;
  height: 36px;
  padding-left: 16px;
  border-bottom: 2px solid #ccc;
  color: #666;
}
.dialog-head h2 { margin: 0; font: inherit; }
.fields {
  display: grid;
  grid-template-columns: 106px 201px;
  grid-auto-rows: 40px;
  grid-template-rows: repeat(7, 40px) 10px;
  gap: 5px 0;
  align-items: center;
  padding: 3px 0 5px 18px;
}
.fields hr {
  grid-column: 1 / -1;
  width: 355px;
  margin: 0 0 0 -16px;
  border: 0;
  border-top: 1px solid #bbb;
}
.fields > input {
  height: 38px;
  padding: 0 4px;
  border: 1px solid #ccc;
  background: #fff;
  font: 17px "Liberation Sans", sans-serif;
}
.types { display: flex; align-items: center; }
.type { width: 35px; height: 40px; padding: 7px 5px; margin-right: 9px; }
.type svg { width: 24px; height: 26px; }
.selected { background: #0696d7; }
.pick {
  display: flex;
  align-items: center;
  gap: 5px;
  width: 102px;
  height: 40px;
  padding-left: 12px;
  background: #0696d7;
  color: #fff;
  white-space: nowrap;
}
.pick-icon { width: 16px; height: 24px; }
.clear { margin-left: 17px; }
.clear svg { width: 14px; height: 14px; }
.select { display: grid; align-items: center; }
.select > * { grid-area: 1 / 1; }
.select svg { z-index: 1; pointer-events: none; }
.select .down { justify-self: end; margin-right: 8px; }
.opt { width: 24px; height: 24px; margin-left: 5px; }
select {
  appearance: none;
  width: 201px;
  height: 40px;
  padding: 0 24px 1px 34px;
  border: 1px solid #ccc;
  border-radius: 0;
  background: #fff;
}
.dialog-foot {
  display: flex;
  align-items: center;
  height: 53px;
  padding: 0 14px 0 12px;
  border-top: 1px solid #666;
}
.info { width: 20px; height: 20px; }
.dialog-foot button { width: 90px; height: 29px; line-height: 24px; }
.ok {
  margin: 0 15px 0 auto;
  border: 2px solid #aaa;
  background: linear-gradient(#6499cf, #38669a);
  color: #fff;
}
.cancel { border: 2px solid #bbb; background: #ebebeb; color: #777; }
```
FILE: script.js
```js
// Isometric ground grid: one cell is 247.64 x 143.2, split into five.
const origin = { x: 1279.6, y: 761 };
const step = 143.2 / 5;
const slope = 143.2 / 247.64;

function lines(keep) {
  let d = "";
  for (let n = -55; n <= 55; n++) {
    if (!keep(n)) continue;
    for (const s of [slope, -slope]) {
      const y0 = origin.y - s * origin.x + n * step;
      d += `M0 ${y0.toFixed(2)}L2532 ${(y0 + s * 2532).toFixed(2)}`;
    }
  }
  return d;
}

document.getElementById("minor").setAttribute("d", lines(n => n % 5 !== 0));
// Line 0 in each direction is an axis and is drawn in its own colour.
document.getElementById("major").setAttribute("d", lines(n => n !== 0 && n % 5 === 0));

const inline = document.getElementById("distance-inline");
inline.focus();
inline.select();
```
